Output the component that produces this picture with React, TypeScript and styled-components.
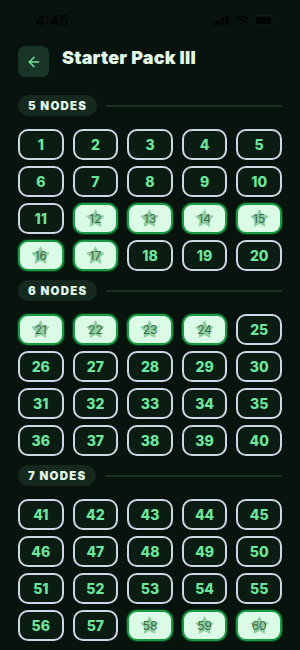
import styled, { createGlobalStyle } from 'styled-components';

const GlobalStyle = createGlobalStyle`
  html, body {
    margin: 0;
    padding: 0;
    background: #07130c;
  }
  body {
    font-family: Inter, 'Noto Sans', sans-serif;
  }
`;

const Screen = styled.div`
  width: 300px;
  height: 650px;
  overflow: hidden;
  background: #07130c;
  box-sizing: border-box;
  padding: 0 18px;
`;

const StatusBar = styled.div`
  height: 40px;
  display: flex;
  align-items: center;
  justify-content: space-between;
  padding: 0 22px 0 35px;
  margin: 0 -18px;
  color: #020503;
  font-family: Inter, sans-serif;
  font-weight: 500;
  font-size: 15px;
`;

const StatusIcons = styled.div`
  display: flex;
  align-items: center;
  gap: 5px;
`;

const Header = styled.div`
  display: flex;
  align-items: center;
  gap: 13px;
  margin-top: 6px;
  height: 31px;
`;

const BackButton = styled.button`
  width: 31px;
  height: 31px;
  border: none;
  border-radius: 7px;
  background: #193528;
  display: flex;
  align-items: center;
  justify-content: center;
  padding: 0;
`;

const Title = styled.h1`
  margin: 0;
  font-size: 18px;
  font-weight: 900;
  color: #e2f6e8;
  letter-spacing: 0.2px;
  position: relative;
  top: -4px;
`;

const Section = styled.section<{ $first?: boolean }>`
  margin-top: ${(p) => (p.$first ? '18px' : '9px')};
`;

const SectionHead = styled.div`
  display: flex;
  align-items: center;
  gap: 9px;
  height: 21px;
  margin-bottom: 13px;
`;

const Pill = styled.span`
  height: 21px;
  box-sizing: border-box;
  padding: 0 10px;
  border-radius: 11px;
  background: #15291e;
  color: #e2f6e8;
  font-size: 11.5px;
  font-weight: 900;
  letter-spacing: 1.2px;
  display: flex;
  align-items: center;
`;

const Rule = styled.div`
  flex: 1;
  height: 2px;
  background: #17301f;
`;

const Grid = styled.div`
  display: grid;
  grid-template-columns: repeat(5, 1fr);
  column-gap: 9px;
  row-gap: 6px;
`;

const Level = styled.button<{ $done?: boolean }>`
  position: relative;
  height: 31px;
  box-sizing: border-box;
  border-radius: 10px;
  padding: 0;
  border: 2px solid ${(p) => (p.$done ? '#1b9a45' : '#cfd6e6')};
  background: ${(p) => (p.$done ? '#dcfbe6' : '#0b1d13')};
  box-shadow: ${(p) => (p.$done ? '0 0 0 1px #0d3a1c' : 'none')};
  color: ${(p) => (p.$done ? '#3d6a4b' : '#6de69b')};
  font-family: Inter, sans-serif;
  font-size: ${(p) => (p.$done ? '12px' : '14px')};
  font-weight: ${(p) => (p.$done ? 400 : 800)};
  display: flex;
  align-items: center;
  justify-content: center;
`;

const StarWrap = styled.span`
  position: absolute;
  inset: 0;
  display: flex;
  align-items: center;
  justify-content: center;
`;

const Num = styled.span`
  position: relative;
`;

function Star() {
  return (
    <StarWrap>
      <svg width="21" height="21" viewBox="0 0 24 24">
        <path
          d="M12 2.5l2.9 6.1 6.6.8-4.9 4.6 1.3 6.6L12 17.3l-5.9 3.3 1.3-6.6-4.9-4.6 6.6-.8z"
          fill="#8fcea1"
          stroke="#8fcea1"
          strokeWidth="1.5"
          strokeLinejoin="round"
        />
      </svg>
    </StarWrap>
  );
}

const sections = [
  { nodes: 5, start: 1, done: [12, 13, 14, 15, 16, 17] },
  { nodes: 6, start: 21, done: [21, 22, 23, 24] },
  { nodes: 7, start: 41, done: [58, 59, 60] },
];

export default function App() {
  return (
    <Screen>
      <GlobalStyle />
      <StatusBar>
        <span>4:45</span>
        <StatusIcons>
          <svg width="17" height="11" viewBox="0 0 17 11">
            <rect x="0" y="7" width="3" height="4" rx="0.7" fill="#020503" />
            <rect x="4.5" y="5" width="3" height="6" rx="0.7" fill="#020503" />
            <rect x="9" y="2.5" width="3" height="8.5" rx="0.7" fill="#020503" />
            <rect x="13.5" y="0" width="3" height="11" rx="0.7" fill="#020503" />
          </svg>
          <svg width="15" height="11" viewBox="0 0 15 11">
            <path d="M7.5 2.2c2.2 0 4.2.9 5.7 2.3l1.1-1.1C12.5 1.6 10.1.6 7.5.6S2.5 1.6.7 3.4l1.1 1.1C3.3 3.1 5.3 2.2 7.5 2.2z" fill="#020503" />
            <path d="M7.5 5.3c1.3 0 2.5.5 3.5 1.4l1.1-1.1C10.9 4.4 9.3 3.7 7.5 3.7S4.1 4.4 2.9 5.6L4 6.7c1-.9 2.2-1.4 3.5-1.4z" fill="#020503" />
            <path d="M7.5 8.4c.5 0 .9.2 1.2.5l-1.2 1.3-1.2-1.3c.3-.3.7-.5 1.2-.5z" fill="#020503" />
          </svg>
          <svg width="24" height="11" viewBox="0 0 24 11">
            <rect x="0.5" y="0.5" width="20" height="10" rx="3" fill="none" stroke="#0d1a12" />
            <rect x="2" y="2" width="15" height="7" rx="1.5" fill="#020503" />
            <rect x="21.5" y="3.5" width="1.5" height="4" rx="0.7" fill="#0d1a12" />
          </svg>
        </StatusIcons>
      </StatusBar>
      <Header>
        <BackButton aria-label="Back">
          <svg width="16" height="16" viewBox="0 0 24 24" fill="none" stroke="#6fe39b" strokeWidth="2.2" strokeLinecap="round" strokeLinejoin="round">
            <path d="M19 12H5" />
            <path d="M12 19l-7-7 7-7" />
          </svg>
        </BackButton>
        <Title>Starter Pack III</Title>
      </Header>
      {sections.map((s, i) => (
        <Section key={s.nodes} $first={i === 0}>
          <SectionHead>
            <Pill>{s.nodes} NODES</Pill>
            <Rule />
          </SectionHead>
          <Grid>
            {Array.from({ length: 20 }, (_, k) => {
              const n = s.start + k;
              const done = s.done.includes(n);
              return (
                <Level key={n} $done={done}>
                  {done && <Star />}
                  <Num>{n}</Num>
                </Level>
              );
            })}
          </Grid>
        </Section>
      ))}
    </Screen>
  );
}
